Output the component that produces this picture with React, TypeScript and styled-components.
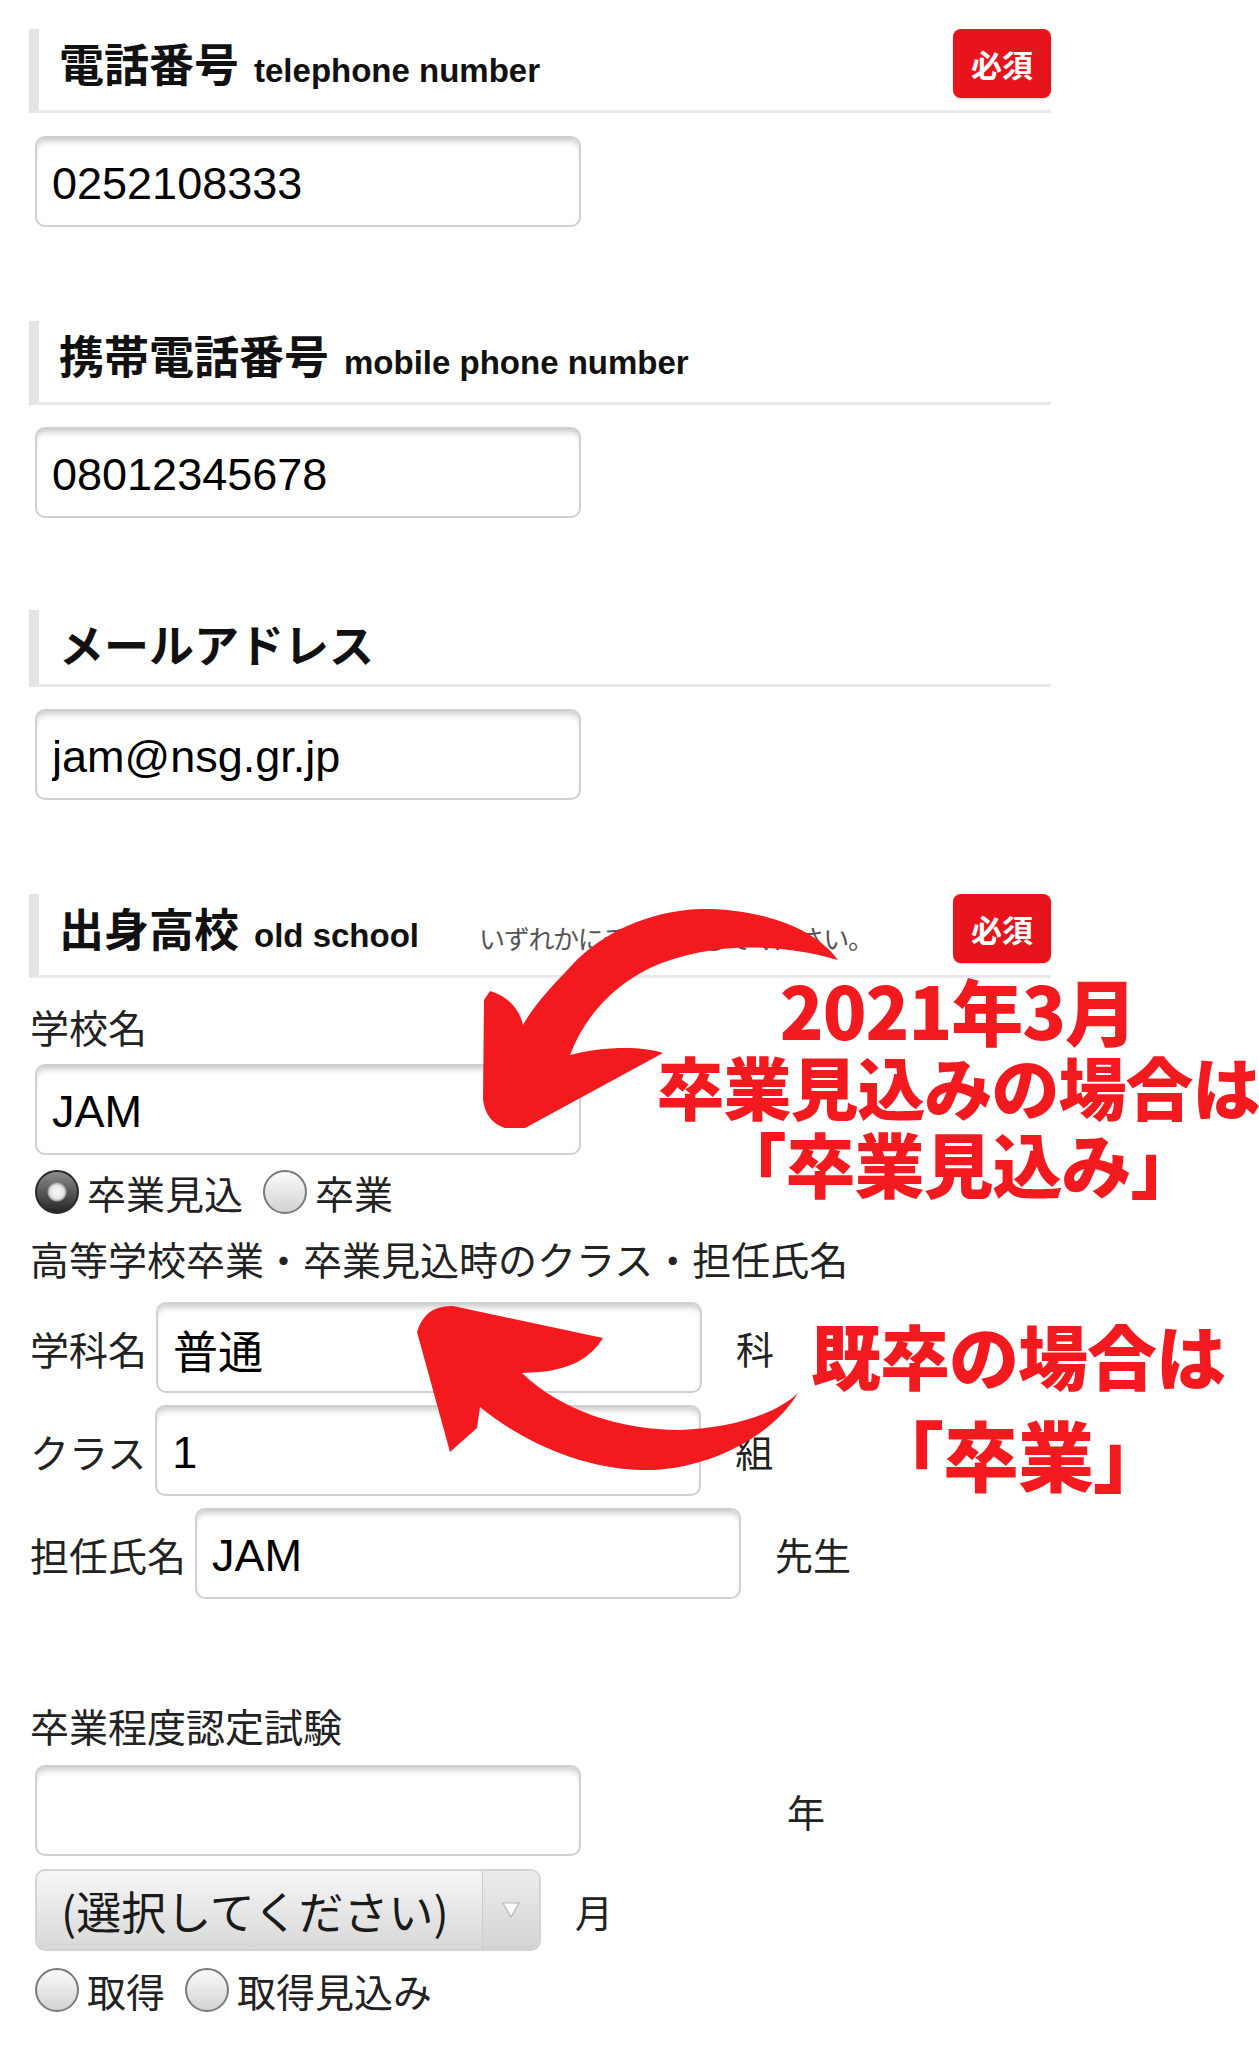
import styled, { createGlobalStyle } from 'styled-components';

const GlobalStyle = createGlobalStyle`
  html, body {
    margin: 0;
    padding: 0;
    background: #fff;
  }
  body {
    font-family: 'Liberation Sans', 'Noto Sans CJK JP', sans-serif;
    color: #1c1c1c;
  }
`;

const Page = styled.div`
  position: relative;
  width: 1259px;
  height: 2048px;
  overflow: hidden;
  box-sizing: border-box;
  padding: 29px 0 0 29px;
`;

const Section = styled.section<{ top: number }>`
  margin-top: ${({ top }) => top}px;
`;

const Head = styled.div<{ compact?: boolean }>`
  display: flex;
  align-items: flex-start;
  width: 1022px;
  height: ${({ compact }) => (compact ? 77 : 84)}px;
  box-sizing: border-box;
  border-left: 10px solid #e4e4e4;
  border-bottom: 3px solid #e9e9e9;
  padding-left: 20px;
`;

const Title = styled.h2`
  display: flex;
  align-items: baseline;
  margin: 15px 0 0;
  font-size: 45px;
  line-height: 45px;
  font-weight: 700;
  color: #111;
  white-space: nowrap;
`;

const TitleEn = styled.span`
  margin-left: 15px;
  font-family: 'Liberation Sans', sans-serif;
  font-size: 33px;
  font-weight: 700;
`;

const Note = styled.span`
  margin: 25px 0 0 60px;
  font-family: 'Noto Sans CJK JP', sans-serif;
  font-size: 26px;
  letter-spacing: -1.3px;
  color: #555;
  white-space: nowrap;
`;

const Badge = styled.span`
  margin-left: auto;
  width: 98px;
  height: 69px;
  border-radius: 8px;
  background: #e8141c;
  color: #fff;
  font-family: 'Noto Sans CJK JP', sans-serif;
  font-weight: 700;
  font-size: 31px;
  display: flex;
  align-items: center;
  justify-content: center;
  box-shadow: 0 1px 2px rgba(0, 0, 0, 0.2);
`;

const TextBox = styled.input<{ top?: number; inline?: boolean }>`
  display: block;
  width: 546px;
  height: 91px;
  box-sizing: border-box;
  margin: ${({ top }) => top ?? 22}px 0 0 ${({ inline }) => (inline ? 0 : 6)}px;
  padding: 4px 15px 0;
  border: 2px solid #d0d0d0;
  border-radius: 10px;
  box-shadow: inset 0 6px 6px -3px rgba(0, 0, 0, 0.22);
  background: #fff;
  font-family: 'Liberation Sans', 'Noto Sans CJK JP', sans-serif;
  font-size: 45px;
  color: #000;
  outline: none;
`;

const Label = styled.div<{ top: number }>`
  margin-top: ${({ top }) => top}px;
  margin-left: 1px;
  font-family: 'Noto Sans CJK JP', sans-serif;
  font-size: 39px;
  line-height: 50px;
  color: #222;
  white-space: nowrap;
`;

const FieldRow = styled.div<{ top: number; rowHeight?: number }>`
  display: flex;
  align-items: center;
  height: ${({ rowHeight }) => rowHeight ?? 91}px;
  margin-top: ${({ top }) => top}px;
  font-family: 'Noto Sans CJK JP', sans-serif;
  font-size: 39px;
  color: #222;
  white-space: nowrap;
`;

const RowLabel = styled.span`
  margin: 0 9px 0 1px;
`;

const Unit = styled.span<{ gap?: number }>`
  margin-left: ${({ gap }) => gap ?? 34}px;
  font-size: 38px;
  color: #222;
`;

const RadioGroup = styled.div<{ top: number }>`
  display: flex;
  align-items: center;
  gap: 20px;
  height: 48px;
  margin: ${({ top }) => top}px 0 0 6px;
  font-family: 'Noto Sans CJK JP', sans-serif;
  font-size: 39px;
  line-height: 48px;
  color: #222;
`;

const RadioItem = styled.label`
  display: flex;
  align-items: center;
  gap: 8px;
`;

const RadioDot = styled.span<{ checked?: boolean }>`
  width: 44px;
  height: 44px;
  border-radius: 50%;
  box-sizing: border-box;
  border: 2px solid ${({ checked }) => (checked ? '#2a2a2a' : '#7a7a7a')};
  background: ${({ checked }) =>
    checked
      ? 'radial-gradient(circle, #fafafa 0, #e4e4e4 7px, #a0a0a0 9px, rgba(0,0,0,0) 10px), linear-gradient(#8c8c8c, #262626)'
      : 'linear-gradient(#fbfbfb, #d2d2d2)'};
`;

const Select = styled.div`
  display: flex;
  align-items: stretch;
  width: 506px;
  height: 82px;
  box-sizing: border-box;
  margin-left: 6px;
  border: 2px solid #d4d4d4;
  border-radius: 10px;
  background: linear-gradient(#f6f6f6, #d8d8d8);
  overflow: hidden;
`;

const SelectText = styled.span`
  flex: 1;
  display: flex;
  align-items: center;
  padding-left: 24px;
  font-size: 45px;
  color: #1a1a1a;
`;

const SelectArrow = styled.span`
  width: 56px;
  display: flex;
  align-items: center;
  justify-content: center;
  border-left: 1px solid #cbcbcb;
  background: linear-gradient(#ececec, #d4d4d4);
`;

const Overlay = styled.svg`
  position: absolute;
  left: 0;
  top: 0;
  pointer-events: none;
`;

const Callout = styled.div<{ x: number; y: number; lineHeight: number }>`
  position: absolute;
  left: ${({ x }) => x}px;
  top: ${({ y }) => y}px;
  transform: translateX(-50%);
  text-align: center;
  white-space: nowrap;
  font-family: 'Noto Sans CJK JP', sans-serif;
  font-weight: 900;
  font-size: 70px;
  line-height: ${({ lineHeight }) => lineHeight}px;
  color: #f21a1f;
  letter-spacing: -1px;
`;

const CalloutLine = styled.div<{ size?: number }>`
  font-size: ${({ size }) => size ?? 70}px;
`;

const Radio = ({ label, checked }: { label: string; checked?: boolean }) => (
  <RadioItem>
    <RadioDot checked={checked} />
    {label}
  </RadioItem>
);

export default function App() {
  return (
    <Page>
      <GlobalStyle />

      <Section top={0}>
        <Head>
          <Title>
            電話番号<TitleEn>telephone number</TitleEn>
          </Title>
          <Badge>必須</Badge>
        </Head>
        <TextBox top={23} readOnly value="0252108333" />
      </Section>

      <Section top={94}>
        <Head>
          <Title>
            携帯電話番号<TitleEn>mobile phone number</TitleEn>
          </Title>
        </Head>
        <TextBox readOnly value="08012345678" />
      </Section>

      <Section top={92}>
        <Head compact>
          <Title>メールアドレス</Title>
        </Head>
        <TextBox readOnly value="jam@nsg.gr.jp" />
      </Section>

      <Section top={94}>
        <Head>
          <Title>
            出身高校<TitleEn>old school</TitleEn>
          </Title>
          <Note>いずれかにチェックしてください。</Note>
          <Badge>必須</Badge>
        </Head>

        <Label top={23}>学校名</Label>
        <TextBox top={13} readOnly value="JAM" />
        <RadioGroup top={13}>
          <Radio label="卒業見込" checked />
          <Radio label="卒業" />
        </RadioGroup>

        <Label top={17}>高等学校卒業・卒業見込時のクラス・担任氏名</Label>
        <FieldRow top={19}>
          <RowLabel>学科名</RowLabel>
          <TextBox top={0} inline readOnly value="普通" />
          <Unit>科</Unit>
        </FieldRow>
        <FieldRow top={12}>
          <RowLabel>クラス</RowLabel>
          <TextBox top={0} inline readOnly value="1" />
          <Unit>組</Unit>
        </FieldRow>
        <FieldRow top={12}>
          <RowLabel>担任氏名</RowLabel>
          <TextBox top={0} inline readOnly value="JAM" />
          <Unit>先生</Unit>
        </FieldRow>

        <Label top={101}>卒業程度認定試験</Label>
        <FieldRow top={15}>
          <TextBox top={0} readOnly value="" />
          <Unit gap={206}>年</Unit>
        </FieldRow>
        <FieldRow top={13} rowHeight={82}>
          <Select>
            <SelectText>(選択してください)</SelectText>
            <SelectArrow>
              <svg width="20" height="18" viewBox="0 0 20 18">
                <polygon points="2,2 18,2 10,16" fill="#fff" stroke="#b8b8b8" strokeWidth="1.2" />
              </svg>
            </SelectArrow>
          </Select>
          <Unit gap={34}>月</Unit>
        </FieldRow>
        <RadioGroup top={15}>
          <Radio label="取得" />
          <Radio label="取得見込み" />
        </RadioGroup>
      </Section>

      <Overlay width="1259" height="2048" viewBox="0 0 1259 2048">
        <path
          fill="#f21a1f"
          d="M838,960 C815,928 760,908 700,909 C648,911 602,933 572,965 C552,986 534,1005 523,1025 C520,1010 508,996 490,991 L484,1000 L483,1100 Q486,1122 505,1128 L525,1128 L663,1053 C640,1045 600,1047 570,1055 C585,1015 615,985 650,968 C700,945 770,940 838,960 Z"
        />
        <path
          fill="#f21a1f"
          d="M798,1393 C770,1440 700,1472 640,1470 C580,1468 520,1440 480,1407 L477,1428 L450,1452 L417,1332 Q425,1305 453,1306 L603,1338 Q585,1368 540,1372 L522,1373 C560,1410 620,1430 680,1430 C730,1428 775,1415 798,1393 Z"
        />
      </Overlay>

      <Callout x={958} y={970} lineHeight={77}>
        <CalloutLine size={72}>2021年3月</CalloutLine>
        <CalloutLine size={68}>卒業見込みの場合は</CalloutLine>
        <CalloutLine>「卒業見込み」</CalloutLine>
      </Callout>
      <Callout x={1018} y={1306} lineHeight={98}>
        <CalloutLine>既卒の場合は</CalloutLine>
        <CalloutLine size={76}>「卒業」</CalloutLine>
      </Callout>
    </Page>
  );
}
